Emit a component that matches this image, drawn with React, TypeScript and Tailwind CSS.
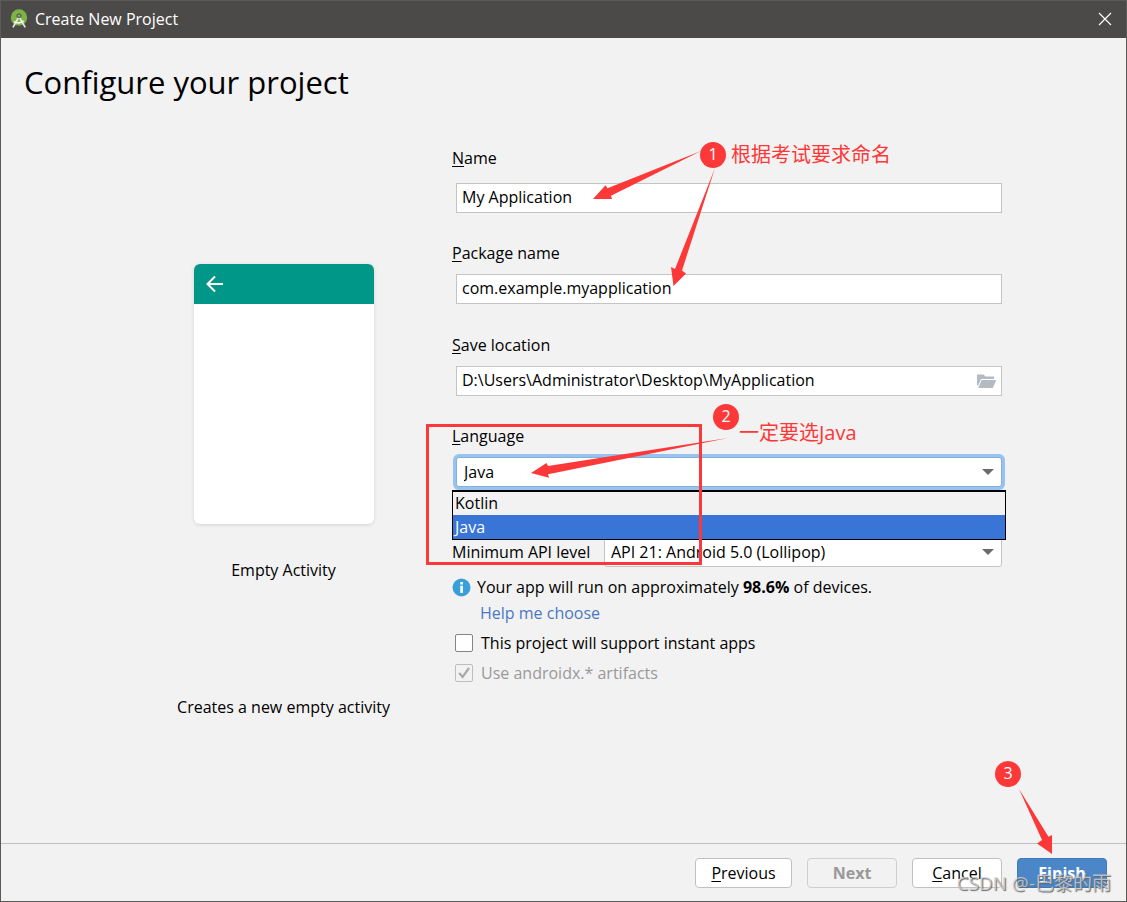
import { useState } from "react";
import type { ReactNode } from "react";

const LANGUAGES = ["Kotlin", "Java"];

function StudioLogo() {
  return (
    <svg className="h-5 w-5" viewBox="0 0 20 20" aria-hidden="true">
      <circle cx="10" cy="8.5" r="8.2" fill="#7cb342" />
      <circle cx="10" cy="6.8" r="2.6" fill="#5b6b52" />
      <circle cx="10" cy="6.8" r="1" fill="#9ab588" />
      <path d="M9.2 9 4 18.4M10.8 9l5.4 9.4" stroke="#e6e6e6" strokeWidth="1.7" fill="none" />
      <path d="M4.8 12.6c3 2 7.4 1.6 9.8-.8" stroke="#f5f5f5" strokeWidth="1.7" fill="none" />
    </svg>
  );
}

function FolderIcon() {
  return (
    <svg className="h-[15px] w-5" viewBox="0 0 20 15" aria-hidden="true">
      <path d="M0 .5h6.5l2 2H17V5H4L1.2 11.5H0z" fill="#b4bbc0" />
      <path d="M4.6 6H19.2L15.8 14H1.2z" fill="#b4bbc0" />
    </svg>
  );
}

function Caret() {
  return (
    <svg
      className="pointer-events-none absolute top-3 right-2 h-[6px] w-3"
      viewBox="0 0 12 6"
      aria-hidden="true"
    >
      <path d="M0 0h12L6 6z" fill="#6b6b6b" />
    </svg>
  );
}

function Mnemonic({ text }: { text: string }) {
  return (
    <>
      <span className="underline underline-offset-2">{text[0]}</span>
      {text.slice(1)}
    </>
  );
}

function FieldLabel({ id, text }: { id: string; text: string }) {
  return (
    <label htmlFor={id} className="block h-6 leading-6">
      <Mnemonic text={text} />
    </label>
  );
}

function Badge({ children, className }: { children: ReactNode; className: string }) {
  return (
    <span
      className={`absolute h-[26px] w-[26px] rounded-full bg-[#fd3838] text-center leading-6 text-white ${className}`}
    >
      {children}
    </span>
  );
}

const inputClass = "h-[30px] w-full border border-[#c4c4c4] bg-white px-[5px] pb-0.5 leading-6 outline-none";
const buttonClass = "h-[30px] rounded-[4px] border leading-6";

function ActivityPreview() {
  return (
    <div className="flex w-[335px] shrink-0 flex-col items-center pt-[118px] pr-0.5">
      <div className="h-[260px] w-[180px] overflow-hidden rounded-md bg-white shadow-[0_1px_4px_rgba(0,0,0,0.12)]">
        <div className="flex h-10 items-center bg-[#009688] pl-3">
          <svg className="h-[18px] w-[18px]" viewBox="0 0 18 18" aria-hidden="true">
            <path d="M17 9H2M9 1.5 1.5 9 9 16.5" fill="none" stroke="#fff" strokeWidth="2" />
          </svg>
        </div>
      </div>
      <p className="mt-[34px] leading-6">Empty Activity</p>
      <p className="mt-[113px] leading-6">Creates a new empty activity</p>
    </div>
  );
}

function FormNotes() {
  return (
    <div className="pointer-events-none absolute inset-0 z-20 text-[#fd3838]">
      <div className="absolute top-[278px] -left-[26px] h-[141px] w-[276px] border-3 border-[#fd3838]" />
      <svg
        className="absolute top-0 left-0 h-[540px] w-[554px] overflow-visible"
        viewBox="452 146 554 540"
        fill="#fd3838"
        aria-hidden="true"
      >
        <path d="M593 199 605.5 185.3 607.5 188.3 701 151 611 195.8 612 199z" />
        <path d="M673.5 286 671 267 675 269 715 168 682 270.5 686 273.5z" />
        <path d="M531 473 546.5 463 548 466 728 438 548 474.3 549 477.8z" />
      </svg>
      <Badge className="-top-1 left-[248px]">1</Badge>
      <span className="absolute -top-[5px] left-[279px] text-xl leading-7 whitespace-nowrap">根据考试要求命名</span>
      <Badge className="top-[258px] left-[261px]">2</Badge>
      <span className="absolute top-[273px] left-[287px] text-xl leading-7 whitespace-nowrap">一定要选Java</span>
    </div>
  );
}

function ProjectForm() {
  const [name, setName] = useState("My Application");
  const [packageName, setPackageName] = useState("com.example.myapplication");
  const [location, setLocation] = useState("D:\\Users\\Administrator\\Desktop\\MyApplication");
  const [language, setLanguage] = useState("Java");
  const [instant, setInstant] = useState(false);

  return (
    <form className="relative min-w-0 flex-1">
      <FieldLabel id="name" text="Name" />
      <div className="mt-[13px] px-1">
        <input id="name" className={inputClass} value={name} onChange={(e) => setName(e.target.value)} />
      </div>

      <div className="mt-7">
        <FieldLabel id="package" text="Package name" />
        <div className="mt-[9px] px-1">
          <input
            id="package"
            className={inputClass}
            value={packageName}
            onChange={(e) => setPackageName(e.target.value)}
          />
        </div>
      </div>

      <div className="mt-[29px]">
        <FieldLabel id="location" text="Save location" />
        <div className="relative mt-[9px] px-1">
          <input
            id="location"
            className={inputClass}
            value={location}
            onChange={(e) => setLocation(e.target.value)}
          />
          <button type="button" aria-label="Browse" className="absolute top-2 right-[9px]">
            <FolderIcon />
          </button>
        </div>
      </div>

      <div className="mt-7">
        <FieldLabel id="language" text="Language" />
        <div className="relative mt-[9px] px-1">
          <div className="relative">
            <select
              id="language"
              className="block h-[30px] w-full appearance-none rounded-[3px] border border-[#87afda] bg-white px-[7px] leading-6 ring-3 ring-[#97c3f3] outline-none"
              value={language}
              onChange={(e) => setLanguage(e.target.value)}
            >
              {LANGUAGES.map((item) => (
                <option key={item}>{item}</option>
              ))}
            </select>
            <Caret />
          </div>
          <ul
            role="listbox"
            aria-label="Language"
            className="absolute inset-x-0 top-[33px] z-10 border border-t-2 border-black bg-[#f2f2f2]"
          >
            {LANGUAGES.map((item) => (
              <li
                key={item}
                role="option"
                aria-selected={item === language}
                onClick={() => setLanguage(item)}
                className={
                  item === language
                    ? "h-6 bg-[#3875d7] px-0.5 leading-6 text-white"
                    : "h-[23px] px-0.5 leading-[23px]"
                }
              >
                {item}
              </li>
            ))}
          </ul>
        </div>
      </div>

      <div className="mt-[50px] flex items-center pr-1">
        <label htmlFor="api" className="w-[152px] shrink-0">
          Minimum API level
        </label>
        <div className="relative flex-1">
          <select
            id="api"
            className="block h-[30px] w-full appearance-none rounded-[3px] border border-[#c4c4c4] bg-white px-1.5 leading-6 outline-none"
          >
            <option>API 21: Android 5.0 (Lollipop)</option>
          </select>
          <Caret />
        </div>
      </div>

      <p className="mt-2 flex h-6 items-center gap-1.5 leading-6 whitespace-nowrap">
        <svg className="h-[19px] w-[19px]" viewBox="0 0 19 19" aria-hidden="true">
          <circle cx="9.5" cy="9.5" r="9" fill="#3a9fd8" />
          <path d="M8.3 4h2.6v2.4H8.3zM8.3 7.8h2.6V15H8.3z" fill="#fff" />
        </svg>
        <span>
          Your app will run on approximately <b>98.6%</b> of devices.
        </span>
      </p>
      <a href="#help" className="mt-0.5 ml-7 block h-6 w-fit leading-6 text-[#4a78c2]">
        Help me choose
      </a>
      <label className="mt-1.5 flex h-6 items-center gap-2 pl-[3px] leading-6">
        <input
          type="checkbox"
          checked={instant}
          onChange={(e) => setInstant(e.target.checked)}
          className="h-[18px] w-[18px] appearance-none rounded-[2px] border border-[#858585] bg-white checked:bg-[#4a86c7]"
        />
        This project will support instant apps
      </label>
      <label className="mt-1.5 flex h-6 items-center gap-2 pl-[3px] leading-6 text-[#999]">
        <span className="relative h-[18px] w-[18px]">
          <input
            type="checkbox"
            checked
            disabled
            readOnly
            className="block h-[18px] w-[18px] appearance-none rounded-[2px] border border-[#bdbdbd]"
          />
          <svg className="absolute inset-0 h-[18px] w-[18px]" viewBox="0 0 18 18" aria-hidden="true">
            <path d="m4.2 9 3.4 4L14 4" fill="none" stroke="#a9a9a9" strokeWidth="2.2" />
          </svg>
        </span>
        Use androidx.* artifacts
      </label>

      <FormNotes />
    </form>
  );
}

function Footer() {
  return (
    <footer className="relative flex justify-end gap-[15px] border-t border-[#c0c0c0] pt-3.5 pr-[19px] pb-[13px]">
      <button type="button" className={`${buttonClass} w-[97px] border-[#c0c0c0] bg-white`}>
        <Mnemonic text="Previous" />
      </button>
      <button
        type="button"
        disabled
        className={`${buttonClass} w-[90px] border-[#cfcfcf] font-bold text-[#999]`}
      >
        Next
      </button>
      <button type="button" className={`${buttonClass} w-[90px] border-[#c0c0c0] bg-white`}>
        <Mnemonic text="Cancel" />
      </button>
      <button
        type="button"
        className={`${buttonClass} w-[90px] border-[#4079b8] bg-[#4a86c8] font-bold text-white`}
      >
        <Mnemonic text="Finish" />
      </button>

      <div className="pointer-events-none absolute -right-px bottom-0 h-[140px] w-[140px]">
        <Badge className="top-0 left-2">3</Badge>
        <svg
          className="absolute inset-0 h-[140px] w-[140px]"
          viewBox="987 761 140 140"
          fill="#fd3838"
          aria-hidden="true"
        >
          <path d="M1052 854 1037 843.5 1042 840 1019 789 1048.5 836.7 1052 835z" />
        </svg>
      </div>
      <span className="pointer-events-none absolute right-[15px] bottom-1 text-[19px] leading-7 whitespace-nowrap text-[#d2d2d2]/80 [text-shadow:1px_1px_1px_#666]">
        CSDN @-巴黎的雨
      </span>
    </footer>
  );
}

export default function App() {
  return (
    <div className="flex min-h-screen flex-col border border-[#5b5a58] bg-[#f2f2f2] font-['Open_Sans','Noto_Sans_CJK_SC',sans-serif] text-base text-black">
      <header className="flex h-[37px] items-center gap-1.5 bg-[#4b4a48] pr-3.5 pb-px pl-2 text-white">
        <StudioLogo />
        <span className="flex-1 text-base">Create New Project</span>
        <button type="button" aria-label="Close">
          <svg className="h-3.5 w-3.5" viewBox="0 0 14 14" aria-hidden="true">
            <path d="m1 1 12 12M13 1 1 13" stroke="#fff" strokeWidth="1.2" />
          </svg>
        </button>
      </header>
      <h1 className="mt-5 pl-[23px] text-[31px] leading-[48px]">Configure your project</h1>
      <main className="mt-10 flex flex-1 pr-30 pl-29">
        <ActivityPreview />
        <ProjectForm />
      </main>
      <Footer />
    </div>
  );
}
